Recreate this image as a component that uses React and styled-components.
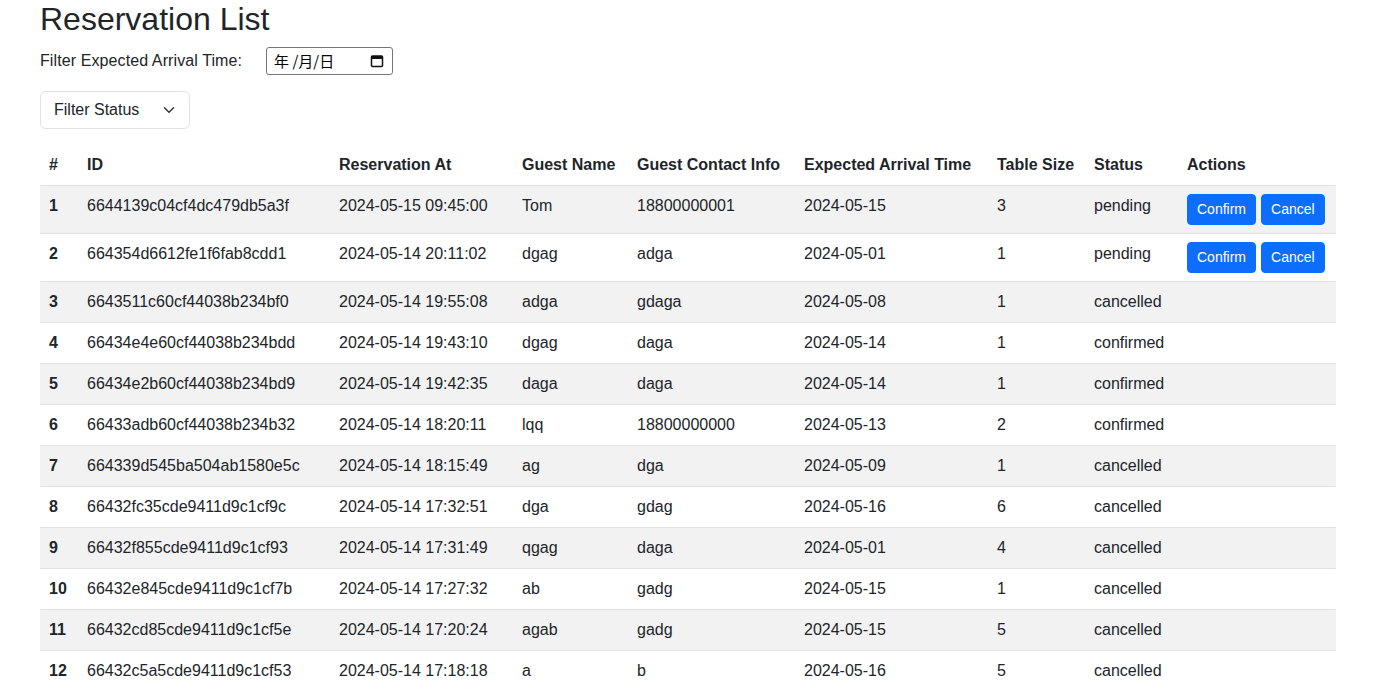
import React from "react"
import styled, { createGlobalStyle } from "styled-components"

const GlobalStyle = createGlobalStyle`
  body {
    margin: 0;
    background: #fff;
    color: #212529;
    font-family: "Liberation Sans", Arial, sans-serif;
    font-size: 16px;
    line-height: 1.5;
  }
`;

const Page = styled.div`
  padding: 0 40px;
`;

const Title = styled.h2`
  margin: 0 0 9px;
  font-size: 32px;
  font-weight: 500;
  line-height: 1.2;
`;

const FilterRow = styled.div`
  display: flex;
  align-items: center;
  height: 28px;
`;

const Label = styled.span`
  font-size: 16px;
  margin-right: 24px;
  letter-spacing: 0.1px;
`;

const DateBox = styled.div`
  display: flex;
  align-items: center;
  justify-content: space-between;
  box-sizing: border-box;
  width: 127px;
  height: 28px;
  padding: 0 8px 0 7px;
  border: 1px solid #767676;
  border-radius: 3px;
  font-family: "Noto Sans CJK SC", "Liberation Sans", sans-serif;
  font-size: 15px;
  color: #000;
`;

const SelectBox = styled.div`
  display: flex;
  align-items: center;
  justify-content: space-between;
  box-sizing: border-box;
  width: 150px;
  height: 38px;
  margin-top: 16px;
  padding: 0 14px 0 13px;
  border: 1px solid #dee2e6;
  border-radius: 6px;
  font-size: 16px;
`;

const Table = styled.table`
  margin-top: 16px;
  width: 1296px;
  border-collapse: collapse;
  table-layout: fixed;
  vertical-align: top;
`;

const Th = styled.th`
  text-align: left;
  font-weight: 700;
  padding: 8px 8px 8px 9px;
  height: 23px;
  border-bottom: 1px solid #dee2e6;
`;

const Row = styled.tr`
  background: ${p => (p.$striped ? "#f2f2f2" : "#fff")};
`;

const Td = styled.td`
  padding: 8px 8px 8px 9px;
  border-bottom: 1px solid #dee2e6;
  font-weight: ${p => (p.$bold ? 700 : 400)};
  white-space: nowrap;
  vertical-align: top;
`;

const Actions = styled.div`
  display: flex;
  gap: 5px;
`;

const Button = styled.button`
  font-family: "Liberation Sans", Arial, sans-serif;
  font-size: 14px;
  line-height: 21px;
  padding: 4px 9px;
  color: #fff;
  background: #0d6efd;
  border: 1px solid #0d6efd;
  border-radius: 4px;
  cursor: pointer;
`;

const columns = [
  ["#", 38],
  ["ID", 252],
  ["Reservation At", 183],
  ["Guest Name", 115],
  ["Guest Contact Info", 167],
  ["Expected Arrival Time", 193],
  ["Table Size", 97],
  ["Status", 93],
  ["Actions", 158],
];

const rows = [
  ["6644139c04cf4dc479db5a3f", "2024-05-15 09:45:00", "Tom", "18800000001", "2024-05-15", 3, "pending"],
  ["664354d6612fe1f6fab8cdd1", "2024-05-14 20:11:02", "dgag", "adga", "2024-05-01", 1, "pending"],
  ["6643511c60cf44038b234bf0", "2024-05-14 19:55:08", "adga", "gdaga", "2024-05-08", 1, "cancelled"],
  ["66434e4e60cf44038b234bdd", "2024-05-14 19:43:10", "dgag", "daga", "2024-05-14", 1, "confirmed"],
  ["66434e2b60cf44038b234bd9", "2024-05-14 19:42:35", "daga", "daga", "2024-05-14", 1, "confirmed"],
  ["66433adb60cf44038b234b32", "2024-05-14 18:20:11", "lqq", "18800000000", "2024-05-13", 2, "confirmed"],
  ["664339d545ba504ab1580e5c", "2024-05-14 18:15:49", "ag", "dga", "2024-05-09", 1, "cancelled"],
  ["66432fc35cde9411d9c1cf9c", "2024-05-14 17:32:51", "dga", "gdag", "2024-05-16", 6, "cancelled"],
  ["66432f855cde9411d9c1cf93", "2024-05-14 17:31:49", "qgag", "daga", "2024-05-01", 4, "cancelled"],
  ["66432e845cde9411d9c1cf7b", "2024-05-14 17:27:32", "ab", "gadg", "2024-05-15", 1, "cancelled"],
  ["66432cd85cde9411d9c1cf5e", "2024-05-14 17:20:24", "agab", "gadg", "2024-05-15", 5, "cancelled"],
  ["66432c5a5cde9411d9c1cf53", "2024-05-14 17:18:18", "a", "b", "2024-05-16", 5, "cancelled"],
];

const CalendarIcon = () => (
  <svg width="14" height="14" viewBox="0 0 14 14">
    <rect x="1.5" y="2" width="11" height="10.5" rx="1" fill="none" stroke="#111" strokeWidth="1.5" />
    <rect x="1.5" y="2" width="11" height="3" fill="#111" />
  </svg>
);

const Chevron = () => (
  <svg width="12" height="12" viewBox="0 0 16 16">
    <path d="M2 5l6 6 6-6" fill="none" stroke="#343a40" strokeWidth="2" strokeLinecap="round" strokeLinejoin="round" />
  </svg>
);

export default function App() {
  return (
    <Page>
      <GlobalStyle />
      <Title>Reservation List</Title>
      <FilterRow>
        <Label>Filter Expected Arrival Time:</Label>
        <DateBox>
          <span>年 /月/日</span>
          <CalendarIcon />
        </DateBox>
      </FilterRow>
      <SelectBox>
        <span>Filter Status</span>
        <Chevron />
      </SelectBox>
      <Table>
        <colgroup>
          {columns.map(([name, w]) => (
            <col key={name} style={{ width: w }} />
          ))}
        </colgroup>
        <thead>
          <tr>
            {columns.map(([name]) => (
              <Th key={name}>{name}</Th>
            ))}
          </tr>
        </thead>
        <tbody>
          {rows.map((r, i) => (
            <Row key={r[0]} $striped={i % 2 === 0}>
              <Td $bold>{i + 1}</Td>
              {r.map((v, j) => (
                <Td key={j}>{v}</Td>
              ))}
              <Td>
                {r[6] === "pending" && (
                  <Actions>
                    <Button>Confirm</Button>
                    <Button>Cancel</Button>
                  </Actions>
                )}
              </Td>
            </Row>
          ))}
        </tbody>
      </Table>
    </Page>
  )
}
